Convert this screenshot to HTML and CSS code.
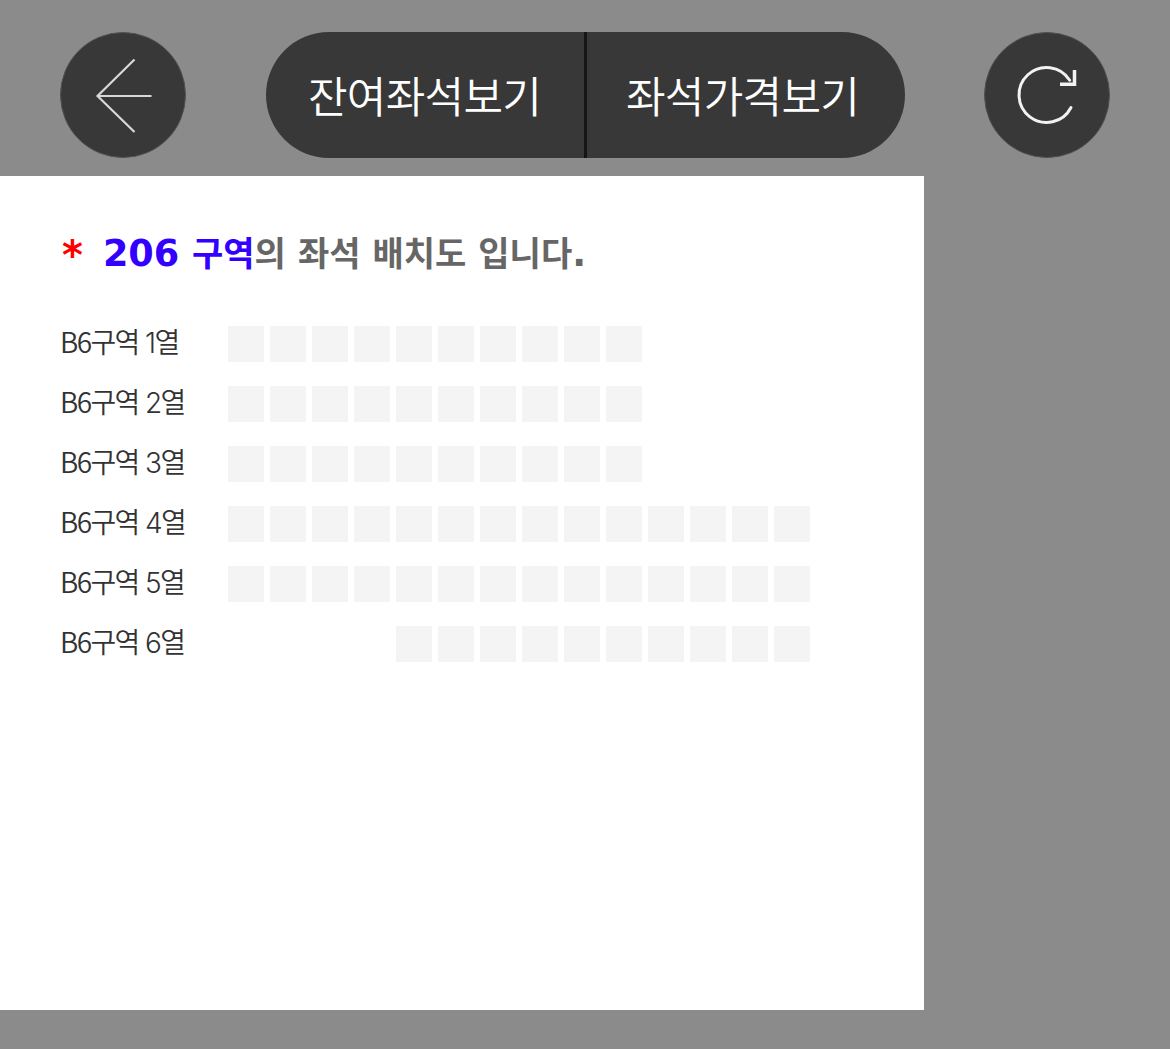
FILE: index.html
```html
<!DOCTYPE html>
<html lang="ko">
<head>
<meta charset="utf-8">
<title>좌석 배치도</title>
<link rel="stylesheet" href="styles.css">
</head>
<body>
<header class="top">
  <button class="circle back"><svg width="124" height="124" viewBox="1 1 124 124"><path d="M74.500 27.500 L37.500 64 L74.500 100 M37.500 64 H91.500" fill="none" stroke="#d8d8d8" stroke-width="2.200"/></svg></button>
  <div class="pill">
    <span class="pill-item first">잔여좌석보기</span>
    <span class="pill-item second">좌석가격보기</span>
  </div>
  <button class="circle reload"><svg width="124" height="124" viewBox="1 1 124 124"><path d="M87 75.500 A27.500 27.500 0 1 1 85.700 48.200" fill="none" stroke="#f2f2f2" stroke-width="3" stroke-linecap="round"/><path d="M90.500 38 V52.300 H76" fill="none" stroke="#f2f2f2" stroke-width="3.500"/></svg></button>
</header>
<main class="panel">
  <h1 class="title"><span class="latin star">*</span><span class="latin zone">206 </span><span class="zone">구역</span>의 좌석 배치도 입니다<span class="latin">.</span></h1>
  <div class="rows">
    <div class="row"><span class="label">B6구역 <span class="num">1</span>열</span><div class="seats"><i></i><i></i><i></i><i></i><i></i><i></i><i></i><i></i><i></i><i></i></div></div>
    <div class="row"><span class="label">B6구역 <span class="num">2</span>열</span><div class="seats"><i></i><i></i><i></i><i></i><i></i><i></i><i></i><i></i><i></i><i></i></div></div>
    <div class="row"><span class="label">B6구역 <span class="num">3</span>열</span><div class="seats"><i></i><i></i><i></i><i></i><i></i><i></i><i></i><i></i><i></i><i></i></div></div>
    <div class="row"><span class="label">B6구역 <span class="num">4</span>열</span><div class="seats"><i></i><i></i><i></i><i></i><i></i><i></i><i></i><i></i><i></i><i></i><i></i><i></i><i></i><i></i></div></div>
    <div class="row"><span class="label">B6구역 <span class="num">5</span>열</span><div class="seats"><i></i><i></i><i></i><i></i><i></i><i></i><i></i><i></i><i></i><i></i><i></i><i></i><i></i><i></i></div></div>
    <div class="row"><span class="label">B6구역 <span class="num">6</span>열</span><div class="seats offset"><i></i><i></i><i></i><i></i><i></i><i></i><i></i><i></i><i></i><i></i></div></div>
  </div>
</main>
</body>
</html>
```
FILE: styles.css
```css
* { box-sizing: border-box; }
html, body { margin: 0; height: 100%; }
body {
  background: #8b8b8b;
  font-family: "Noto Sans CJK KR", "Noto Sans", sans-serif;
  overflow: hidden;
}
.top {
  display: flex;
  align-items: center;
  height: 176px;
  padding: 14px 0 0 60px;
  gap: 80px;
}
.circle {
  width: 126px;
  height: 126px;
  flex: none;
  padding: 0;
  border: 1px solid #525252;
  border-radius: 50%;
  background: #383838;
  display: block;
}
.circle svg { display: block; }
.pill {
  width: 639px;
  height: 126px;
  flex: none;
  display: flex;
  border-radius: 63px;
  background: #383838;
  margin-right: -1px;
}
.pill-item {
  display: flex;
  align-items: center;
  color: #fff;
  font-size: 43px;
  font-weight: 350;
  letter-spacing: -0.700px;
  padding-bottom: 2px;
}
.pill-item.first { width: 318px; padding-left: 42px; }
.pill-item.second { flex: 1; border-left: 3px solid #151515; padding-left: 39px; }
.panel {
  width: 924px;
  height: 834px;
  background: #fff;
  padding: 51px 0 0 60px;
}
.title {
  margin: 0;
  height: 50px;
  padding-left: 2px;
  font-size: 34px;
  line-height: 50px;
  font-weight: 700;
  word-spacing: 2.500px;
  color: #666;
}
.latin { font-family: "DejaVu Sans", sans-serif; font-size: 36.600px; font-weight: 700; word-spacing: 0; }
.star { color: #f00; font-size: 40px; margin-right: 20px; vertical-align: -3px; line-height: 1; }
.zone { color: #3300ff; }
.rows {
  display: flex;
  flex-direction: column;
  gap: 24px;
  margin-top: 49px;
}
.row { display: flex; align-items: center; height: 36px; }
.label {
  width: 168px;
  flex: none;
  font-size: 28px;
  font-weight: 350;
  letter-spacing: -1.600px;
  color: #333;
  white-space: nowrap;
  margin-top: -6px;
}
.num { font-family: Inter, sans-serif; }
.seats { display: flex; gap: 6px; }
.seats.offset { margin-left: 168px; }
.seats i { display: block; width: 36px; height: 36px; background: #f4f4f4; }
```
